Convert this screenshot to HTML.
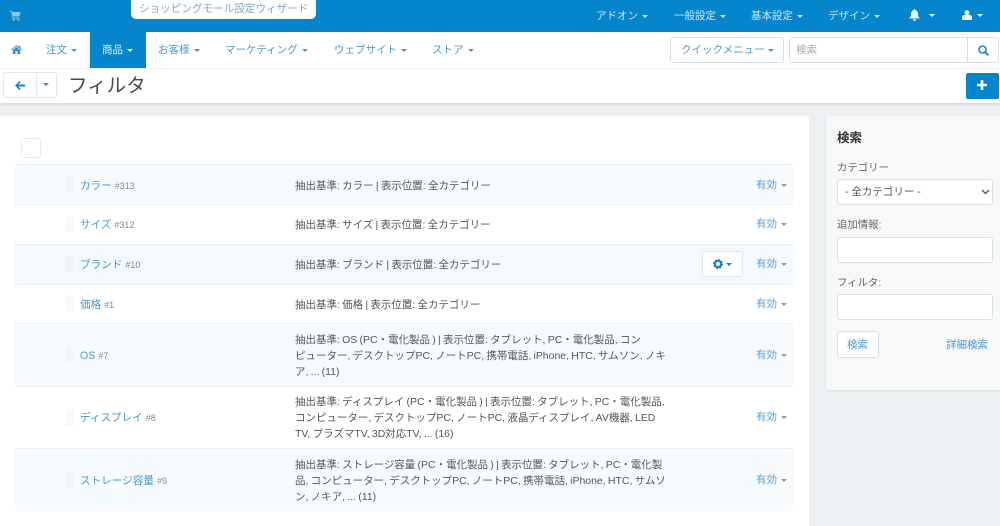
<!DOCTYPE html>
<html lang="ja"><head><meta charset="utf-8"><title>フィルタ</title>
<style>
*{box-sizing:border-box}
html,body{margin:0;padding:0}
body{width:1000px;height:526px;overflow:hidden;position:relative;background:#edf0f3;font-family:"Liberation Sans","Noto Sans CJK JP",sans-serif;font-size:10.5px;color:#555}
.a{position:absolute}
.t{position:absolute;white-space:nowrap;line-height:16px}
.c{display:inline-block;width:0;height:0;border-left:3px solid transparent;border-right:3px solid transparent;border-top:3.500px solid currentColor;vertical-align:middle;margin-left:4px}
.top{color:#cfe6f5;font-size:10.500px}
.nav{color:#4a98d2;font-size:10.500px}
.row{position:absolute;left:15px;width:778px;border-top:1px solid #eceff2}
.blue{background:#f8fbfe}
.name{color:#4a98d2;font-size:10.600px}
.name small{color:#888;font-size:9px}
.d{word-spacing:-.6px;letter-spacing:-.02px}
.st{color:#5aa2d6;font-size:10.500px}
.st .c{color:#999}
.drag{position:absolute;left:66px;width:7px;height:17px;background-image:radial-gradient(#e3e6e8 0.6px,transparent 0.7px);background-size:2.400px 2.400px}
.inp{position:absolute;background:#fff;border:1px solid #d9dfe7;border-radius:3px}
.lab{color:#666;font-size:10.400px}
</style></head><body>
<div class="a" style="left:0;top:0;width:1000px;height:32px;background:#0586cc"></div>
<svg class="a" style="left:10px;top:11px" width="11" height="10" viewBox="0 0 11 10"><path d="M0 0h2l.4 1H10.500L9.500 5.500H3.200L3.500 6.700H9.500V7.600H2.700L1.300 1H0Z" fill="#8fc6e8"/><circle cx="3.500" cy="8.900" r="1" fill="#8fc6e8"/><circle cx="8.500" cy="8.900" r="1" fill="#8fc6e8"/></svg>
<div class="a" style="left:131px;top:0;width:185px;height:19px;background:#fff;border-radius:0 0 5px 5px"></div>
<div class="t" style="left:139px;top:1px;color:#7fa8c8;font-size:10.600px">ショッピングモール設定ウィザード</div>
<div class="t top" style="left:596px;top:8px">アドオン<i class="c"></i></div>
<div class="t top" style="left:674px;top:8px">一般設定<i class="c"></i></div>
<div class="t top" style="left:751px;top:8px">基本設定<i class="c"></i></div>
<div class="t top" style="left:828px;top:8px">デザイン<i class="c"></i></div>
<svg class="a" style="left:909px;top:9px" width="11" height="12" viewBox="0 0 11 12"><path d="M5.500 0C6 0 6.300.4 6.300 1 8.300 1.500 9 3 9 5c0 2 .8 3.300 2 4.500H0C1.200 8.300 2 7 2 5c0-2 .7-3.500 2.700-4C4.700.4 5 0 5.500 0ZM4 10.300h3C7 11.300 6.300 12 5.500 12S4 11.300 4 10.300Z" fill="#eaf5fc"/></svg>
<i class="c a" style="left:929px;top:14px;color:#eaf5fc;margin:0"></i>
<svg class="a" style="left:962px;top:10px" width="10" height="10" viewBox="0 0 10 10"><circle cx="5" cy="2.700" r="2.500" fill="#eaf5fc"/><path d="M0 10V7.500C0 6 1.200 5 2.500 5h5C8.800 5 10 6 10 7.500V10Z" fill="#eaf5fc"/></svg>
<i class="c a" style="left:977px;top:14px;color:#eaf5fc;margin:0"></i>

<div class="a" style="left:0;top:32px;width:1000px;height:71px;background:#fff;box-shadow:0 1px 3px rgba(0,0,0,.14)"></div>
<div class="a" style="left:0;top:68px;width:1000px;height:1px;background:#f0f2f4"></div>
<svg class="a" style="left:11px;top:45px" width="11" height="9" viewBox="0 0 11 9"><path d="M5.500 0 8 2.100V.7h1.300v2.500L11 4.700l-.6.700-4.900-4.100L.6 5.400 0 4.700ZM1.700 5.300 5.500 2.100l3.800 3.200V9H6.500V6.300h-2V9H1.700Z" fill="#3c8fca"/></svg>
<div class="t nav" style="left:46px;top:42px">注文<i class="c"></i></div>
<div class="a" style="left:90px;top:32px;width:56px;height:36px;background:#0586cc"></div>
<div class="t" style="left:102px;top:42px;color:#e4f2fb">商品<i class="c"></i></div>
<div class="t nav" style="left:158px;top:42px">お客様<i class="c"></i></div>
<div class="t nav" style="left:225px;top:42px">マーケティング<i class="c"></i></div>
<div class="t nav" style="left:334px;top:42px">ウェブサイト<i class="c"></i></div>
<div class="t nav" style="left:432px;top:42px">ストア<i class="c"></i></div>
<div class="inp" style="left:670px;top:37px;width:114px;height:26px"></div>
<div class="t nav" style="left:681px;top:42px">クイックメニュー<i class="c" style="margin-left:3px"></i></div>
<div class="inp" style="left:789px;top:37px;width:210px;height:26px"></div>
<div class="a" style="left:967px;top:38px;width:1px;height:24px;background:#d9dfe7"></div>
<div class="t" style="left:796px;top:42px;color:#aaa;font-size:10.500px">検索</div>
<svg class="a" style="left:978px;top:45px" width="11" height="11" viewBox="0 0 11 11"><circle cx="4.500" cy="4.500" r="3.500" fill="none" stroke="#1a87c9" stroke-width="1.600"/><path d="M7 7l3.300 3.300" stroke="#1a87c9" stroke-width="2"/></svg>

<div class="inp" style="left:3px;top:72px;width:54px;height:26px;border-color:#e2e6ea"></div>
<div class="a" style="left:36px;top:73px;width:1px;height:24px;background:#e2e6ea"></div>
<svg class="a" style="left:15px;top:81px" width="10" height="9" viewBox="0 0 10 9"><path d="M4.500 0 5.700 1.200 3.200 3.500H10v2H3.200l2.500 2.300L4.500 9 0 4.500Z" fill="#1483c6"/></svg>
<i class="c a" style="left:43px;top:83px;color:#3b8fc9;margin:0"></i>
<div class="t" style="left:68px;top:74px;font-size:19.500px;line-height:24px;color:#4a4a4a">フィルタ</div>
<div class="a" style="left:966px;top:73px;width:33px;height:26px;background:#0586cc;border-radius:2px"></div>
<svg class="a" style="left:977px;top:80px" width="10" height="10" viewBox="0 0 10 10"><path d="M3.700 0h2.600v3.700H10v2.600H6.300V10H3.700V6.300H0V3.700h3.700Z" fill="#fff"/></svg>

<div class="a" style="left:0;top:116px;width:809px;height:410px;background:#fff;border-radius:0 3px 0 0"></div>
<div class="a" style="left:21px;top:138px;width:20px;height:20px;background:#fff;border:1px solid #e6e8ea;border-radius:3px"></div>

<div class="row blue" style="top:164px;height:41px"></div>
<div class="row" style="top:204px;height:41px;background:#fff"></div>
<div class="row" style="top:244px;height:41px;background:#f4f9fd"></div>
<div class="row" style="top:284px;height:40px;background:#fff"></div>
<div class="row blue" style="top:323px;height:64px"></div>
<div class="row" style="top:386px;height:63px;background:#fff"></div>
<div class="row blue" style="top:448px;height:63px"></div>

<div class="drag" style="top:176px"></div>
<div class="drag" style="top:216px"></div>
<div class="drag" style="top:255px"></div>
<div class="drag" style="top:295px"></div>
<div class="drag" style="top:346px"></div>
<div class="drag" style="top:409px"></div>
<div class="drag" style="top:471px"></div>

<div class="t name" style="left:80px;top:178px">カラー <small>#313</small></div>
<div class="t name" style="left:80px;top:217px">サイズ <small>#312</small></div>
<div class="t name" style="left:80px;top:257px">ブランド <small>#10</small></div>
<div class="t name" style="left:80px;top:297px">価格 <small>#1</small></div>
<div class="t name" style="left:80px;top:348px">OS <small>#7</small></div>
<div class="t name" style="left:80px;top:410px">ディスプレイ <small>#8</small></div>
<div class="t name" style="left:80px;top:473px">ストレージ容量 <small>#9</small></div>

<div class="t d" style="left:295px;top:178px">抽出基準: カラー | 表示位置: 全カテゴリー</div>
<div class="t d" style="left:295px;top:217px">抽出基準: サイズ | 表示位置: 全カテゴリー</div>
<div class="t d" style="left:295px;top:257px">抽出基準: ブランド | 表示位置: 全カテゴリー</div>
<div class="t d" style="left:295px;top:297px">抽出基準: 価格 | 表示位置: 全カテゴリー</div>
<div class="t d" style="left:295px;top:332px">抽出基準: OS (PC・電化製品 ) | 表示位置: タブレット, PC・電化製品, コン<br>ピューター, デスクトップPC, ノートPC, 携帯電話, iPhone, HTC, サムソン, ノキ<br>ア, ... (11)</div>
<div class="t d" style="left:295px;top:394px">抽出基準: ディスプレイ (PC・電化製品 ) | 表示位置: タブレット, PC・電化製品,<br>コンピューター, デスクトップPC, ノートPC, 液晶ディスプレイ, AV機器, LED<br>TV, プラズマTV, 3D対応TV, ... (16)</div>
<div class="t d" style="left:295px;top:457px">抽出基準: ストレージ容量 (PC・電化製品 ) | 表示位置: タブレット, PC・電化製<br>品, コンピューター, デスクトップPC, ノートPC, 携帯電話, iPhone, HTC, サムソ<br>ン, ノキア, ... (11)</div>

<div class="inp" style="left:702px;top:251px;width:41px;height:26px;border-color:#e2e6ea"></div>
<svg class="a" style="left:713px;top:259px" width="10" height="10" viewBox="0 0 10 10"><circle cx="5" cy="5" r="3.200" fill="none" stroke="#1483c6" stroke-width="2.200"/><circle cx="5" cy="5" r="4.400" fill="none" stroke="#1483c6" stroke-width="1.200" stroke-dasharray="1.700 1.750"/></svg>
<i class="c a" style="left:726px;top:263px;color:#1483c6;margin:0"></i>

<div class="t st" style="left:756px;top:177px">有効<i class="c"></i></div>
<div class="t st" style="left:756px;top:216px">有効<i class="c"></i></div>
<div class="t st" style="left:756px;top:256px">有効<i class="c"></i></div>
<div class="t st" style="left:756px;top:296px">有効<i class="c"></i></div>
<div class="t st" style="left:756px;top:347px">有効<i class="c"></i></div>
<div class="t st" style="left:756px;top:409px">有効<i class="c"></i></div>
<div class="t st" style="left:756px;top:472px">有効<i class="c"></i></div>

<div class="a" style="left:826px;top:116px;width:174px;height:274px;background:#f7f8f8;border-radius:3px 0 0 3px;box-shadow:0 1px 2px rgba(0,0,0,.08)"></div>
<div class="t" style="left:837px;top:130px;font-size:12.500px;font-weight:bold;color:#333">検索</div>
<div class="t lab" style="left:837px;top:161px">カテゴリー</div>
<div class="inp" style="left:837px;top:179px;width:156px;height:26px"></div>
<div class="t" style="left:845px;top:184px;color:#555">- 全カテゴリー -</div>
<svg class="a" style="left:981px;top:189px" width="9" height="6" viewBox="0 0 9 6"><path d="M1 1l3.500 3.500L8 1" fill="none" stroke="#555" stroke-width="1.400"/></svg>
<div class="t lab" style="left:837px;top:218px">追加情報:</div>
<div class="inp" style="left:837px;top:237px;width:156px;height:26px"></div>
<div class="t lab" style="left:837px;top:276px">フィルタ:</div>
<div class="inp" style="left:837px;top:294px;width:156px;height:26px"></div>
<div class="inp" style="left:837px;top:331px;width:42px;height:27px"></div>
<div class="t nav" style="left:847px;top:337px">検索</div>
<div class="t nav" style="left:946px;top:337px">詳細検索</div>
</body></html>
